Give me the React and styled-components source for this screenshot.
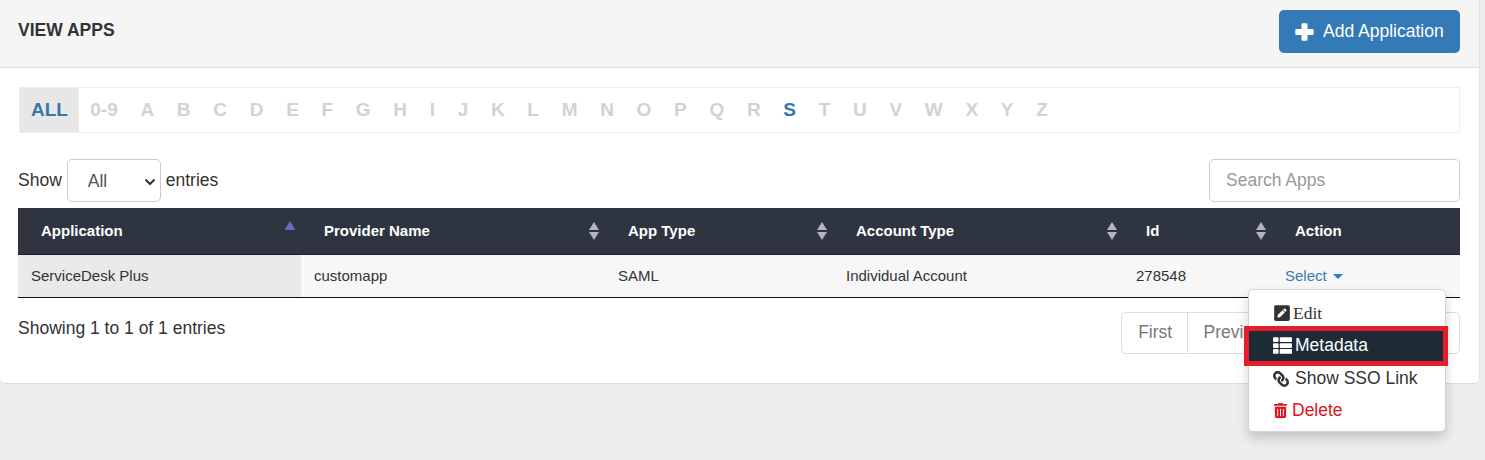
import React from "react";
import styled, { createGlobalStyle } from "styled-components";
import { FaPenSquare, FaThList, FaLink, FaTrashAlt } from "react-icons/fa";

const GlobalStyle = createGlobalStyle`
  html, body {
    margin: 0;
    height: 100%;
    background: #eeeeef;
    font-family: "Liberation Sans", Arial, sans-serif;
    color: #333;
  }
`;

const letters = "0-9 A B C D E F G H I J K L M N O P Q R S T U V W X Y Z".split(" ");

const columns = [
  { label: "Application", value: "ServiceDesk Plus", width: 283, sort: "asc" },
  { label: "Provider Name", value: "customapp", width: 304, sort: "both" },
  { label: "App Type", value: "SAML", width: 228, sort: "both" },
  { label: "Account Type", value: "Individual Account", width: 290, sort: "both" },
  { label: "Id", value: "278548", width: 149, sort: "both" },
];

const chevron =
  "data:image/svg+xml,%3Csvg xmlns='http://www.w3.org/2000/svg' width='12' height='8'%3E%3Cpath d='M1.5 1.5 L6 6 L10.5 1.5' fill='none' stroke='%23333' stroke-width='2'/%3E%3C/svg%3E";

const SortIcon = ({ sort }) => (
  <svg viewBox="0 0 12 20" width="12" height="20" style={{ display: "block" }}>
    {sort === "asc" ? (
      <path d="M6 0 L11.5 9 H0.5 Z" fill="#6a6cbd" />
    ) : (
      <>
        <path d="M6 1 L11 9 H1 Z" fill="#b2b5be" />
        <path d="M6 19 L11 11 H1 Z" fill="#b2b5be" />
      </>
    )}
  </svg>
);

const PlusIcon = () => (
  <svg viewBox="0 0 19 18" width="19" height="18">
    <path
      d="M6.5 1.5 A1.2 1.2 0 0 1 7.7 0.3 H11.3 A1.2 1.2 0 0 1 12.5 1.5 V6 H17.5 A1.2 1.2 0 0 1 18.7 7.2 V10.8 A1.2 1.2 0 0 1 17.5 12 H12.5 V16.5 A1.2 1.2 0 0 1 11.3 17.7 H7.7 A1.2 1.2 0 0 1 6.5 16.5 V12 H1.5 A1.2 1.2 0 0 1 0.3 10.8 V7.2 A1.2 1.2 0 0 1 1.5 6 H6.5 Z"
      fill="#fff"
    />
  </svg>
);

export default function App() {
  return (
    <>
      <GlobalStyle />
      <Panel>
        <PanelHeader>
          <Title>VIEW APPS</Title>
          <AddButton>
            <PlusIcon />
            Add Application
          </AddButton>
        </PanelHeader>
        <PanelBody>
          <AlphaBar>
            <AlphaItem $all>ALL</AlphaItem>
            {letters.map((l) => (
              <AlphaItem key={l} $on={l === "S"}>
                {l}
              </AlphaItem>
            ))}
          </AlphaBar>
          <Toolbar>
            <Entries>
              Show
              <PageSize defaultValue="All">
                <option>All</option>
              </PageSize>
              entries
            </Entries>
            <SearchBox placeholder="Search Apps" />
          </Toolbar>
          <Table>
            <thead>
              <tr>
                {columns.map((c) => (
                  <HeadCell key={c.label} style={{ width: c.width }}>
                    <HeadInner>
                      {c.label}
                      <SortIcon sort={c.sort} />
                    </HeadInner>
                  </HeadCell>
                ))}
                <HeadCell>Action</HeadCell>
              </tr>
            </thead>
            <tbody>
              <tr>
                {columns.map((c, i) => (
                  <BodyCell key={c.label} $sorted={i === 0}>
                    {c.value}
                  </BodyCell>
                ))}
                <ActionCell>
                  <SelectLink>
                    Select <Caret />
                  </SelectLink>
                  <Menu>
                    <MenuItem $serif $gap={2} $tall>
                      <FaPenSquare size={18} />
                      Edit
                    </MenuItem>
                    <MenuItem $active $gap={3} $tall>
                      <FaThList size={19} />
                      Metadata
                    </MenuItem>
                    <MenuItem $gap={6}>
                      <ChainIcon size={16} />
                      Show SSO Link
                    </MenuItem>
                    <MenuItem $danger $gap={4}>
                      <FaTrashAlt size={15} />
                      Delete
                    </MenuItem>
                  </Menu>
                </ActionCell>
              </tr>
            </tbody>
          </Table>
          <Footer>
            <FooterInfo>Showing 1 to 1 of 1 entries</FooterInfo>
            <Pager>
              <PageLink>First</PageLink>
              <PageLink>Previous</PageLink>
              <PageLink>1</PageLink>
              <PageLink>Next</PageLink>
              <PageLink>Last</PageLink>
            </Pager>
          </Footer>
        </PanelBody>
      </Panel>
    </>
  );
}

const Panel = styled.div`
  width: 1479px;
  background: #fff;
  border-right: 1px solid #e4e4e6;
  border-bottom: 1px solid #dcdcde;
  border-bottom-right-radius: 5px;
  border-bottom-left-radius: 5px;
`;

const PanelHeader = styled.div`
  height: 68px;
  box-sizing: border-box;
  padding: 10px 19px 0 18px;
  display: flex;
  justify-content: space-between;
  align-items: flex-start;
  background: #f5f5f6;
  border-bottom: 1px solid #dfdfe2;
`;

const Title = styled.div`
  font-size: 17.5px;
  font-weight: 700;
  line-height: 41px;
  color: #333;
`;

const AddButton = styled.button`
  display: flex;
  align-items: center;
  gap: 9px;
  width: 181px;
  height: 43px;
  padding: 0 0 0 16px;
  border: 0;
  border-radius: 5px;
  background: #337ab7;
  color: #fff;
  font: 17.5px "Liberation Sans", Arial, sans-serif;
`;

const PanelBody = styled.div`
  padding: 19px 19px 29px 18px;
`;

const AlphaBar = styled.div`
  display: flex;
  align-items: stretch;
  height: 46px;
  box-sizing: border-box;
  margin-left: 1px;
  border: 1px solid #eeeeef;
`;

const AlphaItem = styled.div`
  display: flex;
  align-items: center;
  padding: 0 ${(p) => (p.$all ? "11px" : "11.35px")};
  font-size: 19px;
  font-weight: 700;
  color: ${(p) => (p.$all || p.$on ? "#3a77a8" : "#d2d2d4")};
  background: ${(p) => (p.$all ? "#e7e7e8" : "transparent")};
`;

const Toolbar = styled.div`
  display: flex;
  justify-content: space-between;
  margin-top: 26px;
`;

const Entries = styled.label`
  display: flex;
  align-items: center;
  gap: 5px;
  font-size: 17.5px;
`;

const PageSize = styled.select`
  appearance: none;
  width: 94px;
  height: 43px;
  padding: 0 0 0 20px;
  border: 1px solid #ccc;
  border-radius: 5px;
  background: #fff url("${chevron}") no-repeat 76px 18px;
  color: #555;
  font: 17.5px "Liberation Sans", Arial, sans-serif;
`;

const SearchBox = styled.input`
  width: 251px;
  height: 43px;
  box-sizing: border-box;
  padding: 0 16px;
  border: 1px solid #ccc;
  border-radius: 5px;
  font: 17.5px "Liberation Sans", Arial, sans-serif;
  &::placeholder {
    color: #999;
    opacity: 1;
  }
`;

const Table = styled.table`
  width: 1442px;
  margin-top: 6px;
  border-collapse: collapse;
  table-layout: fixed;
`;

const HeadCell = styled.th`
  height: 46px;
  padding: 0 0 0 23px;
  box-sizing: border-box;
  background: #2e3540;
  color: #fff;
  font-size: 15px;
  font-weight: 700;
  text-align: left;
  border-bottom: 1px solid #1d2126;
`;

const HeadInner = styled.div`
  display: flex;
  justify-content: space-between;
  align-items: center;
  padding-right: 5px;
`;

const BodyCell = styled.td`
  height: 42px;
  padding: 0 0 0 13px;
  background: ${(p) => (p.$sorted ? "#e9e9ea" : "#f7f7f8")};
  font-size: 15px;
  color: #333;
  border-bottom: 1px solid #111;
`;

const ActionCell = styled(BodyCell)`
  position: relative;
`;

const SelectLink = styled.a`
  display: inline-flex;
  align-items: center;
  gap: 6px;
  color: #3a7cac;
`;

const Caret = styled.i`
  display: block;
  margin-top: 2px;
  border-top: 5px solid #337ab7;
  border-left: 5px solid transparent;
  border-right: 5px solid transparent;
`;

const Menu = styled.div`
  position: absolute;
  z-index: 2;
  top: 34px;
  left: -24px;
  width: 198px;
  height: 143px;
  box-sizing: border-box;
  padding: 6px 0;
  background: #fff;
  border: 1px solid #d4d4d6;
  border-radius: 5px;
  box-shadow: 0 6px 12px rgba(0, 0, 0, 0.18);
`;

const MenuItem = styled.div`
  position: relative;
  display: flex;
  align-items: center;
  gap: ${(p) => p.$gap}px;
  box-sizing: border-box;
  height: ${(p) => (p.$tall ? "33px" : "32px")};
  padding: ${(p) => (p.$active ? "0" : "2px")} 0 0 24px;
  font-size: 17.5px;
  font-family: ${(p) => (p.$serif ? '"Liberation Serif", serif' : "inherit")};
  color: ${(p) => (p.$danger ? "#e0141f" : p.$active ? "#fff" : "#333")};
  background: ${(p) => (p.$active ? "#1c2b36" : "transparent")};
  ${(p) =>
    p.$active &&
    `&::after {
      content: "";
      position: absolute;
      inset: -3px -3px -4px -5px;
      border: 5px solid #e61e2b;
    }`}
`;

const ChainIcon = styled(FaLink)`
  transform: scaleX(-1);
`;

const Footer = styled.div`
  display: flex;
  justify-content: space-between;
  align-items: flex-start;
  margin-top: 14px;
  font-size: 17.5px;
`;

const FooterInfo = styled.span`
  line-height: 32px;
`;

const Pager = styled.div`
  display: flex;
  height: 42px;
  box-sizing: border-box;
  border: 1px solid #ddd;
  border-radius: 5px;
`;

const PageLink = styled.a`
  display: flex;
  align-items: center;
  padding: 0 14.4px 0 16px;
  color: #777;
  & + & {
    border-left: 1px solid #ddd;
  }
`;
